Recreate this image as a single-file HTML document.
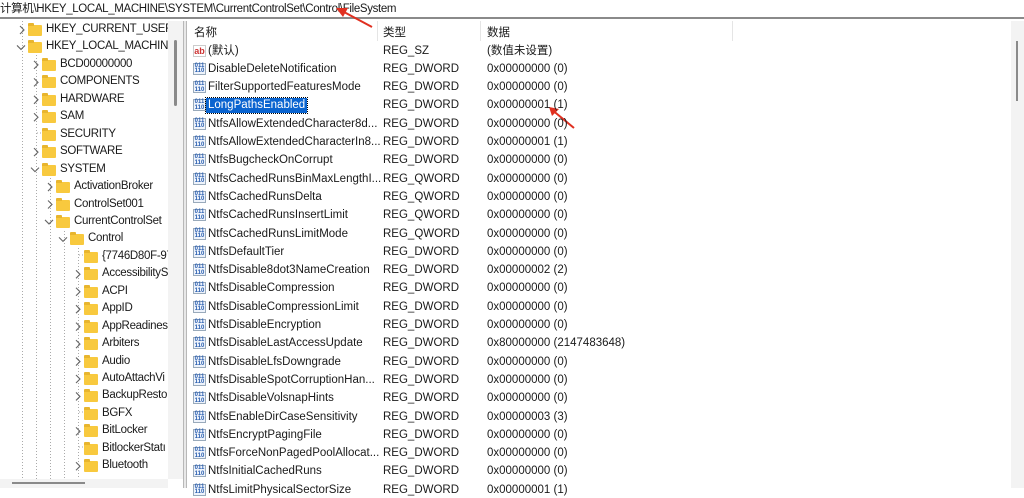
<!DOCTYPE html>
<html><head><meta charset="utf-8"><style>
*{margin:0;padding:0;box-sizing:border-box}
body{width:1024px;height:488px;overflow:hidden;background:#fff;font-family:"Liberation Sans","Noto Sans CJK SC",sans-serif;font-size:11.5px;color:#1a1a1a;position:relative}
.abs{position:absolute;white-space:nowrap}
#addr{left:0;top:0;width:1024px;height:19px;border-bottom:2px solid #8a8a8a;font-size:11.5px;letter-spacing:-0.35px;line-height:18px}
#left{left:0;top:21px;width:168px;height:467px;overflow:hidden}
#lsb{left:168px;top:21px;width:15px;height:458px;background:#f3f3f3}
#split{left:183px;top:21px;width:4px;height:467px;background:#e8e8e8;border-left:1px solid #b8b8b8;border-right:1px solid #b8b8b8}
.fold{position:absolute;width:14px;height:11px;background:#f8c93e;border-radius:1px}
.fold:before{content:"";position:absolute;left:0;top:-2px;width:6px;height:3px;background:#e8b52e;border-radius:1px 1px 0 0}
.ico{position:absolute;width:13px;height:12px;font-size:6px;line-height:5.5px;color:#2a5fb0;font-weight:bold;text-align:center;border:1px solid #9ab;background:#eef3fb}
.ab{position:absolute;width:13px;height:12px;font-size:9px;line-height:11px;color:#c33;font-weight:bold;border:1px solid #ccc;text-align:center}
.tt{letter-spacing:-0.3px}
</style></head><body>
<div id="addr" class="abs">计算机\HKEY_LOCAL_MACHINE\SYSTEM\CurrentControlSet\Control\FileSystem</div>
<svg class="abs" style="left:330px;top:6px" width="50" height="26"><path d="M14 6 L42 21" stroke="#e03020" stroke-width="2" fill="none"/><path d="M6 2 L18 2 L13 11 Z" fill="#e03020"/></svg>
<svg class="abs" style="left:548px;top:106px" width="30" height="26"><path d="M3 3 L26 22" stroke="#e03020" stroke-width="2"/><path d="M1 1 L11 3 L4 10 Z" fill="#e03020"/></svg>
<div id="left" class="abs">
<svg class="abs" style="left:0;top:0" width="168" height="467">
<g stroke="#aaa" stroke-dasharray="1,2" fill="none">
<line x1="22.5" y1="0" x2="22.5" y2="467"/><line x1="36.5" y1="34" x2="36.5" y2="467"/>
<line x1="50.5" y1="157" x2="50.5" y2="467"/><line x1="64.5" y1="210" x2="64.5" y2="467"/>
<line x1="78.5" y1="227" x2="78.5" y2="467"/>
<line x1="79" y1="234" x2="86" y2="234"/><line x1="79" y1="391" x2="86" y2="391"/><line x1="79" y1="426" x2="86" y2="426"/>
<line x1="37" y1="112" x2="44" y2="112"/>
</g><g id="chev" stroke="#666" stroke-width="1.1" fill="none"></g></svg>
</div>
<div id="lsb" class="abs"><div style="position:absolute;left:6px;top:19px;width:3px;height:66px;background:#8a8a8a;border-radius:2px"></div></div>
<div class="abs" style="left:0;top:479px;width:168px;height:9px;background:#f3f3f3"><div style="position:absolute;left:12px;top:3px;width:73px;height:2px;background:#8a8a8a"></div></div>
<div id="split" class="abs"></div>
<div class="abs" style="left:1011px;top:21px;width:13px;height:467px;background:#f3f3f3"><div style="position:absolute;left:5px;top:20px;width:2px;height:60px;background:#8a8a8a"></div></div>
<div class="abs" style="left:377px;top:21px;width:1px;height:20px;background:#e5e5e5"></div>
<div class="abs" style="left:480px;top:21px;width:1px;height:20px;background:#e5e5e5"></div>
<div class="abs" style="left:732px;top:21px;width:1px;height:20px;background:#e5e5e5"></div>
<div class="abs" style="left:194px;top:24px">名称</div>
<div class="abs" style="left:383px;top:24px">类型</div>
<div class="abs" style="left:487px;top:24px">数据</div>
<div id="tree"></div>
<div id="rows"></div>
<script>
var t=[[0,"HKEY_CURRENT_USER",">"],[0,"HKEY_LOCAL_MACHINE","v"],[1,"BCD00000000",">"],[1,"COMPONENTS",">"],[1,"HARDWARE",">"],[1,"SAM",">"],[1,"SECURITY",""],[1,"SOFTWARE",">"],[1,"SYSTEM","v"],[2,"ActivationBroker",">"],[2,"ControlSet001",">"],[2,"CurrentControlSet","v"],[3,"Control","v"],[4,"{7746D80F-97",""],[4,"AccessibilityS",">"],[4,"ACPI",">"],[4,"AppID",">"],[4,"AppReadines",">"],[4,"Arbiters",">"],[4,"Audio",">"],[4,"AutoAttachVi",">"],[4,"BackupResto",">"],[4,"BGFX",""],[4,"BitLocker",">"],[4,"BitlockerStatı",""],[4,"Bluetooth",">"]];
var h="",c="";
t.forEach(function(r,i){var y=22+i*17.45,x=r[0]*14,cy=y-21+8;
if(r[2]==">")c+='<polyline points="'+(x+20)+','+(cy-4)+' '+(x+24)+','+cy+' '+(x+20)+','+(cy+4)+'"/>';
if(r[2]=="v")c+='<polyline points="'+(x+17)+','+(cy-2)+' '+(x+21)+','+(cy+2)+' '+(x+25)+','+(cy-2)+'"/>';
h+='<div class="fold" style="left:'+(x+28)+'px;top:'+(y+3)+'px"></div>';
var w=168-(x+46);
h+='<div class="abs tt" style="left:'+(x+46)+'px;top:'+(y+1)+'px;width:'+w+'px;overflow:hidden;background:#fff">'+r[1]+'</div>';});
document.getElementById("tree").innerHTML=h;
document.getElementById("chev").innerHTML=c;
var R=[["(默认)","REG_SZ","(数值未设置)"],["DisableDeleteNotification","REG_DWORD","0x00000000 (0)"],["FilterSupportedFeaturesMode","REG_DWORD","0x00000000 (0)"],["LongPathsEnabled","REG_DWORD","0x00000001 (1)"],["NtfsAllowExtendedCharacter8d...","REG_DWORD","0x00000000 (0)"],["NtfsAllowExtendedCharacterIn8...","REG_DWORD","0x00000001 (1)"],["NtfsBugcheckOnCorrupt","REG_DWORD","0x00000000 (0)"],["NtfsCachedRunsBinMaxLengthI...","REG_QWORD","0x00000000 (0)"],["NtfsCachedRunsDelta","REG_QWORD","0x00000000 (0)"],["NtfsCachedRunsInsertLimit","REG_QWORD","0x00000000 (0)"],["NtfsCachedRunsLimitMode","REG_QWORD","0x00000000 (0)"],["NtfsDefaultTier","REG_DWORD","0x00000000 (0)"],["NtfsDisable8dot3NameCreation","REG_DWORD","0x00000002 (2)"],["NtfsDisableCompression","REG_DWORD","0x00000000 (0)"],["NtfsDisableCompressionLimit","REG_DWORD","0x00000000 (0)"],["NtfsDisableEncryption","REG_DWORD","0x00000000 (0)"],["NtfsDisableLastAccessUpdate","REG_DWORD","0x80000000 (2147483648)"],["NtfsDisableLfsDowngrade","REG_DWORD","0x00000000 (0)"],["NtfsDisableSpotCorruptionHan...","REG_DWORD","0x00000000 (0)"],["NtfsDisableVolsnapHints","REG_DWORD","0x00000000 (0)"],["NtfsEnableDirCaseSensitivity","REG_DWORD","0x00000003 (3)"],["NtfsEncryptPagingFile","REG_DWORD","0x00000000 (0)"],["NtfsForceNonPagedPoolAllocat...","REG_DWORD","0x00000000 (0)"],["NtfsInitialCachedRuns","REG_DWORD","0x00000000 (0)"],["NtfsLimitPhysicalSectorSize","REG_DWORD","0x00000001 (1)"]];
h="";
R.forEach(function(r,i){var y=43.5+i*18.3;
h+=(i==0?'<div class="ab" style="left:193px;top:'+(y+1)+'px">ab</div>':'<div class="ico" style="left:193px;top:'+(y+1)+'px">011<br>110</div>');
var sel=i==3?'background:#0a64d0;color:#fff;padding:0 2px;left:206px;outline:1px dotted #000;':'left:208px;';
h+='<div class="abs" style="'+sel+'top:'+y+'px;line-height:15px">'+r[0]+'</div>';
h+='<div class="abs" style="left:383px;top:'+y+'px;line-height:15px">'+r[1]+'</div>';
h+='<div class="abs" style="left:487px;top:'+y+'px;line-height:15px">'+r[2]+'</div>';});
document.getElementById("rows").innerHTML=h;
</script>
</body></html>
